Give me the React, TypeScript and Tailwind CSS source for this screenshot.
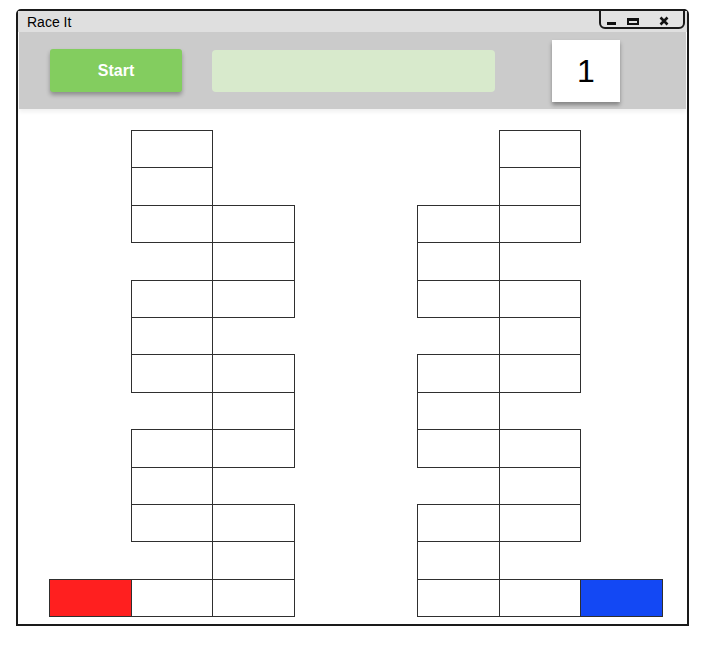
import React from "react";

// board layout, one string per row: X = cell, R = red start, B = blue start, . = empty
const leftRows = [
  ".X.", ".X.", ".XX", "..X", ".XX", ".X.", ".XX",
  "..X", ".XX", ".X.", ".XX", "..X", "RXX",
];
const rightRows = [
  ".X.", ".X.", "XX.", "X..", "XX.", ".X.", "XX.",
  "X..", "XX.", ".X.", "XX.", "X..", "XXB",
];

function Cell({ kind }: { kind: string }) {
  if (kind === ".") return <div className="w-[81.7px] shrink-0" />;
  const fill =
    kind === "R" ? "bg-[#ff1f1f]" : kind === "B" ? "bg-[#1348f4]" : "bg-white";
  return (
    <div className="w-[81.7px] shrink-0">
      <div className={`w-[82.7px] h-[38.4px] border border-[#2f2f2f] ${fill}`} />
    </div>
  );
}

function Board({ rows }: { rows: string[] }) {
  return (
    <div className="flex flex-col">
      {rows.map((row, i) => (
        <div key={i} className="flex h-[37.4px]">
          {row.split("").map((k, j) => (
            <Cell key={j} kind={k} />
          ))}
        </div>
      ))}
    </div>
  );
}

export default function App() {
  return (
    <div className="w-[717px] h-[645px] bg-white pt-[9px] pl-[16px] font-['Liberation_Sans',Arial,sans-serif]">
      <div className="w-[673px] h-[617px] border-2 border-[#1a1a1a] rounded-tl-[5px] rounded-tr-[5px] flex flex-col">
        {/* Title bar */}
        <div className="h-[21px] bg-[#dfdfdf] flex justify-between items-start">
          <span className="pl-[9px] pt-[2px] text-[14px] text-black leading-[18px]">Race It</span>
          <div className="mr-[2px] -mt-[2px] w-[86px] h-[20px] border-2 border-[#1a1a1a] rounded-b-[6px] bg-[#e3e3e3] flex items-center pl-[6px] gap-[11px] pt-[3px]">
            <div className="w-[9px] h-[3px] bg-[#111] mt-[6px]" />
            <div className="w-[12px] h-[7px] border-2 border-t-[3px] border-[#111] mt-[1px]" />
            <svg width="10" height="10" viewBox="0 0 10 10" className="ml-[9px]">
              <path d="M1.5 1.5 L8.5 8.5 M8.5 1.5 L1.5 8.5" stroke="#111" strokeWidth="2.6" />
            </svg>
          </div>
        </div>

        {/* Toolbar */}
        <div className="h-[77px] mx-px bg-[#cbcbcb] flex items-center pl-[31px] shadow-[0_3px_4px_rgba(0,0,0,0.06)]">
          <button className="w-[132px] h-[43px] rounded-[3px] bg-[#83cd5f] text-white font-bold text-[16px] leading-[40px] shadow-[0_3px_4px_rgba(0,0,0,0.3)]">
            Start
          </button>
          <div className="ml-[30px] w-[283px] h-[42px] rounded-[4px] bg-[#d8eacc]" />
          <div className="ml-[57px] w-[68px] h-[62px] bg-white flex items-center justify-center text-[32px] text-black shadow-[0_3px_4px_rgba(0,0,0,0.35)]">
            1
          </div>
        </div>

        {/* Race boards */}
        <div className="flex pt-[21px] pl-[31px] gap-[122.9px]">
          <Board rows={leftRows} />
          <Board rows={rightRows} />
        </div>
      </div>
    </div>
  );
}
